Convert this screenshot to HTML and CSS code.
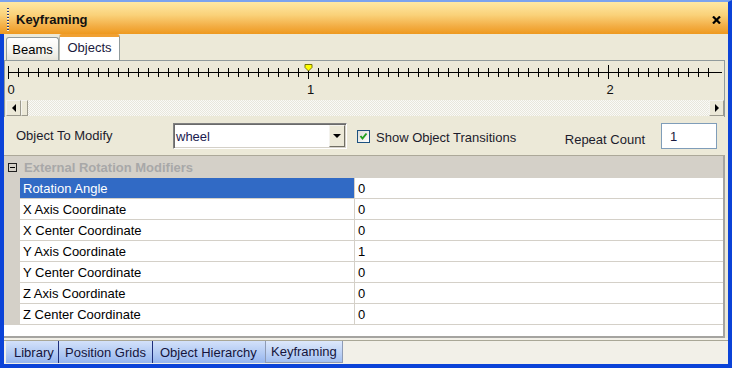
FILE: index.html
```html
<!DOCTYPE html>
<html lang="en">
<head>
    <meta charset="UTF-8">
    <title>Keyframing</title>
    <link rel="stylesheet" href="styles.css">
</head>
<body>

<div class="window">
    <div class="titlebar">
        <span class="grip"></span>
        <span class="title">Keyframing</span>
        <svg class="close" width="9" height="8" viewBox="0 0 9 8">
            <path d="M1 0.5 L8 7.5 M8 0.5 L1 7.5" stroke="#000" stroke-width="2.2" fill="none"/>
        </svg>
    </div>

    <div class="client">
        <div class="tabs">
            <div class="tab">Beams</div>
            <div class="tab active">Objects</div>
        </div>

        <div class="tab-page">
            <!-- timeline ruler: 300px per unit, tick every 10px -->
            <svg class="ruler" width="719" height="39">
                <defs>
                    <pattern id="tick" x="3" y="0" width="10" height="39" patternUnits="userSpaceOnUse">
                        <rect x="0" y="7" width="1" height="9" fill="#000"/>
                    </pattern>
                </defs>
                <rect x="3" y="0" width="701" height="39" fill="url(#tick)"/>
                <rect x="3" y="11" width="714" height="1" fill="#000"/>
                <rect x="3" y="5" width="1" height="13" fill="#000"/>
                <rect x="303" y="9" width="1" height="9" fill="#000"/>
                <rect x="603" y="4" width="1" height="14" fill="#000"/>
                <polygon points="300,3.5 307,3.5 307,6.5 303.5,10 300,6.5" fill="#FFFF00" stroke="#77770A" stroke-width="1"/>
                <text x="2.5" y="33">0</text>
                <text x="302" y="33">1</text>
                <text x="601.5" y="33">2</text>
            </svg>

            <div class="hscroll">
                <div class="sb-btn"><span class="arrow-left"></span></div>
                <div class="sb-thumb"></div>
                <div class="sb-track"></div>
                <div class="sb-btn"><span class="arrow-right"></span></div>
            </div>
        </div>

        <div class="controls">
            <span class="ctl-label">Object To Modify</span>
            <div class="combo">
                <span class="combo-text">wheel</span>
                <span class="combo-btn"><span class="arrow-down"></span></span>
            </div>
            <span class="checkbox">
                <svg width="11" height="11" viewBox="0 0 11 11">
                    <path d="M2.5 5 L4.5 7.5 L8.5 2.5" stroke="#21A121" stroke-width="2" fill="none"/>
                </svg>
            </span>
            <span class="check-label">Show Object Transitions</span>
            <span class="repeat-label">Repeat Count</span>
            <div class="textbox">1</div>
        </div>

        <div class="grid">
            <div class="category">
                <span class="gutter"><span class="toggle"></span></span>
                <span class="cat-title">External Rotation Modifiers</span>
            </div>
            <div class="prop selected">
                <span class="gutter"></span><span class="name">Rotation Angle</span><span class="value">0</span>
            </div>
            <div class="prop">
                <span class="gutter"></span><span class="name">X Axis Coordinate</span><span class="value">0</span>
            </div>
            <div class="prop">
                <span class="gutter"></span><span class="name">X Center Coordinate</span><span class="value">0</span>
            </div>
            <div class="prop">
                <span class="gutter"></span><span class="name">Y Axis Coordinate</span><span class="value">1</span>
            </div>
            <div class="prop">
                <span class="gutter"></span><span class="name">Y Center Coordinate</span><span class="value">0</span>
            </div>
            <div class="prop">
                <span class="gutter"></span><span class="name">Z Axis Coordinate</span><span class="value">0</span>
            </div>
            <div class="prop">
                <span class="gutter"></span><span class="name">Z Center Coordinate</span><span class="value">0</span>
            </div>
            <div class="grid-fill"></div>
        </div>

        <div class="dock">
            <div class="dock-tabs">
                <span class="dock-tab lib">Library</span>
                <span class="dock-tab pos">Position Grids</span>
                <span class="dock-tab hier">Object Hierarchy</span>
                <span class="dock-tab key active">Keyframing</span>
            </div>
        </div>
    </div>
</div>

</body>
</html>
```

FILE: styles.css
```css
body {
    margin: 0;
    font-family: "Liberation Sans", Arial, sans-serif;
    font-size: 13px;
    color: #000;
}

.window {
    width: 732px;
    height: 368px;
    box-sizing: border-box;
    border-top: 2px solid #7BA3EE;
    border-right: 4px solid #0B43D8;
    border-bottom: 4px solid #0B43D8;
    background-color: #ECE9D8;
    display: flex;
    flex-direction: column;
}

/* --- title bar --- */
.titlebar {
    height: 32px;
    box-sizing: border-box;
    padding-top: 3px;
    display: flex;
    align-items: center;
    background: linear-gradient(#FEE8A4, #FAD27A 40%, #F3AE45 75%, #EE991F);
}

.grip {
    width: 2px;
    height: 24px;
    margin-left: 7px;
    background: repeating-linear-gradient(#2A3A7C 0 1px, #FFF3CC 1px 2px, transparent 2px 3px);
}

.title {
    margin-left: 7px;
    font-weight: bold;
    font-size: 13px;
    color: #111;
}

.close {
    margin-left: auto;
    margin-right: 7px;
}

/* --- client area --- */
.client {
    flex: 1;
    border-left: 4px solid #0B43D8;
    display: flex;
    flex-direction: column;
}

.tabs {
    height: 26px;
    display: flex;
    align-items: flex-end;
    padding-left: 2px;
}

.tab {
    height: 23px;
    width: 53px;
    box-sizing: border-box;
    border: 1px solid #919B9C;
    border-bottom: none;
    border-radius: 3px 3px 0 0;
    background: linear-gradient(#FFFFFF, #F5F4EF 60%, #E6E4DA);
    line-height: 24px;
    text-align: center;
}

.tab.active {
    height: 26px;
    width: 61px;
    border-top: 3px solid #F0A032;
    border-left-color: #B8B8B0;
    background: #FFFFFF;
    line-height: 21px;
    color: #1A1A40;
}

.tab-page {
    width: 721px;
    box-sizing: border-box;
    border: 1px solid #919B9C;
    border-bottom: none;
    padding-bottom: 1px;
}

.ruler {
    display: block;
}

.ruler text {
    font-family: "Liberation Sans", Arial, sans-serif;
    font-size: 13px;
    fill: #111;
}

.hscroll {
    height: 16px;
    margin-left: 1px;
    display: flex;
}

.sb-btn {
    width: 15px;
    height: 16px;
    box-sizing: border-box;
    background: #ECE9D8;
    border: 1px solid;
    border-color: #F4F3EE #9C9A8E #9C9A8E #F4F3EE;
    display: flex;
    align-items: center;
    justify-content: center;
}

.sb-thumb {
    width: 7px;
    height: 16px;
    box-sizing: border-box;
    background: #ECE9D8;
    border: 1px solid;
    border-color: #F4F3EE #9C9A8E #9C9A8E #F4F3EE;
}

.sb-track {
    flex: 1;
    background: repeating-conic-gradient(#FAFAF7 0 25%, #E8E6DC 0 50%) 0 0 / 2px 2px;
}

.arrow-left {
    width: 0;
    height: 0;
    border-top: 4px solid transparent;
    border-bottom: 4px solid transparent;
    border-right: 4px solid #000;
}

.arrow-right {
    width: 0;
    height: 0;
    border-top: 4px solid transparent;
    border-bottom: 4px solid transparent;
    border-left: 4px solid #000;
}

/* --- controls row --- */
.controls {
    height: 38px;
    display: flex;
    align-items: center;
    padding-left: 12px;
    padding-right: 11px;
}

.ctl-label {
    width: 157px;
    margin-top: -1px;
    color: #1C1C2C;
}

.combo {
    width: 174px;
    height: 26px;
    box-sizing: border-box;
    border: 1px solid;
    border-color: #808080 #FFFFFF #FFFFFF #808080;
    box-shadow: inset 1px 1px #6A6A6A, inset -1px -1px #D4D0C8;
    background: #FFFFFF;
    display: flex;
    align-items: center;
    padding: 1px 1px 1px 2px;
}

.combo-text {
    flex: 1;
    margin-top: 1px;
    color: #1A1A50;
}

.combo-btn {
    width: 16px;
    height: 22px;
    box-sizing: border-box;
    background: #ECE9D8;
    border: 1px solid;
    border-color: #F4F3EE #716F64 #716F64 #F4F3EE;
    display: flex;
    align-items: center;
    justify-content: center;
}

.arrow-down {
    width: 0;
    height: 0;
    border-left: 4px solid transparent;
    border-right: 4px solid transparent;
    border-top: 4px solid #000;
}

.checkbox {
    width: 13px;
    height: 13px;
    box-sizing: border-box;
    margin-left: 10px;
    border: 1px solid #1C5180;
    background: linear-gradient(135deg, #DCDCD7, #FFFFFF);
    display: flex;
}

.check-label {
    margin-left: 6px;
    margin-top: 2px;
    color: #1C1C2C;
}

.repeat-label {
    margin-left: auto;
    margin-right: 16px;
    margin-top: 6px;
    color: #1C1C2C;
}

.textbox {
    width: 56px;
    height: 26px;
    box-sizing: border-box;
    border: 1px solid #7F9DB9;
    background: #FFFFFF;
    padding-left: 8px;
    line-height: 25px;
    color: #1A1A40;
}

/* --- property grid --- */
.grid {
    height: 183px;
    width: 721px;
    box-sizing: border-box;
    border-top: 1px solid #ACA899;
    border-right: 2px solid #A5A4A0;
    border-bottom: 2px solid #A5A4A0;
    display: flex;
    flex-direction: column;
    background: #FFFFFF;
}

.gutter {
    width: 16px;
    flex-shrink: 0;
    align-self: stretch;
    background: #D4D0C8;
}

.category {
    height: 22px;
    display: flex;
    align-items: center;
    background: #D4D0C8;
}

.category .gutter {
    display: flex;
    align-items: center;
    padding-left: 4px;
    box-sizing: border-box;
}

.toggle {
    width: 9px;
    height: 9px;
    box-sizing: border-box;
    border: 1px solid #202020;
    position: relative;
    margin-top: 1px;
}

.toggle::after {
    content: "";
    position: absolute;
    left: 1px;
    top: 3px;
    width: 5px;
    height: 1px;
    background: #000;
}

.cat-title {
    padding-left: 4px;
    margin-top: 1px;
    font-weight: bold;
    color: #A8A8A8;
}

.prop {
    height: 21px;
    display: flex;
}

.prop .name {
    width: 335px;
    box-sizing: border-box;
    padding-left: 3px;
    line-height: 21px;
    border-right: 1px solid #D4D0C8;
    border-bottom: 1px solid #D4D0C8;
}

.prop .value {
    flex: 1;
    padding-left: 3px;
    line-height: 21px;
    border-bottom: 1px solid #D4D0C8;
}

.prop.selected .name {
    background: #316AC5;
    color: #FFFFFF;
}

.grid-fill {
    flex: 1;
}

/* --- docked window tabs --- */
.dock {
    height: 26px;
    box-sizing: border-box;
    padding-top: 2px;
    background: #F2F0E8;
}

.dock-tabs {
    border-top: 1px solid #A9A796;
    height: 22px;
    padding-left: 2px;
    display: flex;
}

.dock-tab {
    height: 22px;
    box-sizing: border-box;
    padding-left: 7px;
    line-height: 23px;
    color: #14143C;
    background: linear-gradient(#D3E1FA, #B2CAF3 55%, #96B5EE);
}

.dock-tab.lib {
    width: 53px;
    padding-left: 8px;
    border-right: 1px solid #1E2E7A;
}

.dock-tab.pos {
    width: 94px;
    padding-left: 6px;
    border-right: 1px solid #1E2E7A;
}

.dock-tab.hier {
    width: 112px;
}

.dock-tab.key {
    width: 78px;
    padding-left: 5px;
    border: 1px solid #8E9BB5;
    border-top: none;
    line-height: 22px;
    background: linear-gradient(#DDE8FB, #BFD3F5 55%, #A3BFF0);
}
```
